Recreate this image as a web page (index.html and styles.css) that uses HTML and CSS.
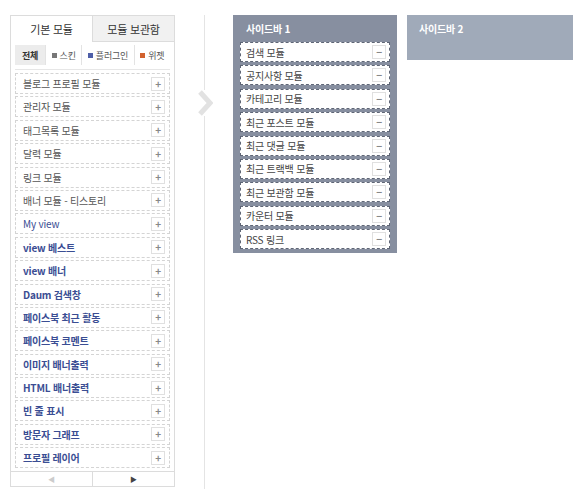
FILE: index.html
```html
<!DOCTYPE html>
<html lang="ko">
  <head>
    <meta charset="UTF-8" />
    <title>사이드바 관리</title>
    <link rel="stylesheet" href="styles.css">
  </head>
  <body>
    <div class="layout">
      <div class="modules">
        <div class="tabs">
          <div class="tab active">기본 모듈</div>
          <div class="tab">모듈 보관함</div>
        </div>
        <div class="filters">
          <span class="filter on">전체</span>
          <span class="filter"><i class="sq skin"></i>스킨</span>
          <span class="filter"><i class="sq plugin"></i>플러그인</span>
          <span class="filter"><i class="sq widget"></i>위젯</span>
        </div>
        <ul class="list">
          <li class="item">블로그 프로필 모듈<span class="btn">+</span></li>
          <li class="item">관리자 모듈<span class="btn">+</span></li>
          <li class="item">태그목록 모듈<span class="btn">+</span></li>
          <li class="item">달력 모듈<span class="btn">+</span></li>
          <li class="item">링크 모듈<span class="btn">+</span></li>
          <li class="item">배너 모듈 - 티스토리<span class="btn">+</span></li>
          <li class="item blue">My view<span class="btn">+</span></li>
          <li class="item blue bold">view 베스트<span class="btn">+</span></li>
          <li class="item blue bold">view 배너<span class="btn">+</span></li>
          <li class="item blue bold">Daum 검색창<span class="btn">+</span></li>
          <li class="item blue bold">페이스북 최근 활동<span class="btn">+</span></li>
          <li class="item blue bold">페이스북 코멘트<span class="btn">+</span></li>
          <li class="item blue bold">이미지 배너출력<span class="btn">+</span></li>
          <li class="item blue bold">HTML 배너출력<span class="btn">+</span></li>
          <li class="item blue bold">빈 줄 표시<span class="btn">+</span></li>
          <li class="item blue bold">방문자 그래프<span class="btn">+</span></li>
          <li class="item blue bold">프로필 레이어<span class="btn">+</span></li>
        </ul>
        <div class="pager">
          <span class="page prev">&#9664;</span>
          <span class="page next">&#9654;</span>
        </div>
      </div>

      <div class="divider">
        <svg class="arrow" width="16" height="26" viewBox="0 0 16 26">
          <path d="M3 2 L13 13 L3 24" fill="none" stroke="#e2e2e2" stroke-width="5" />
        </svg>
      </div>

      <div class="sidebar first">
        <h2 class="title">사이드바 1</h2>
        <ul class="slots">
          <li class="slot">검색 모듈<span class="btn">&minus;</span></li>
          <li class="slot">공지사항 모듈<span class="btn">&minus;</span></li>
          <li class="slot">카테고리 모듈<span class="btn">&minus;</span></li>
          <li class="slot">최근 포스트 모듈<span class="btn">&minus;</span></li>
          <li class="slot">최근 댓글 모듈<span class="btn">&minus;</span></li>
          <li class="slot">최근 트랙백 모듈<span class="btn">&minus;</span></li>
          <li class="slot">최근 보관함 모듈<span class="btn">&minus;</span></li>
          <li class="slot">카운터 모듈<span class="btn">&minus;</span></li>
          <li class="slot">RSS 링크<span class="btn">&minus;</span></li>
        </ul>
      </div>

      <div class="sidebar second">
        <h2 class="title">사이드바 2</h2>
      </div>
    </div>
  </body>
</html>
```

FILE: styles.css
```css
body {
  margin: 0;
  background: #fff;
  font-family: "Noto Sans CJK KR", "Noto Sans", sans-serif;
  font-size: 10px;
  letter-spacing: -0.2px;
  color: #555;
}
ul {
  list-style: none;
  margin: 0;
  padding: 0;
}
.layout {
  display: flex;
  align-items: flex-start;
  padding: 15px 0 0 10px;
  height: 474px;
}

/* left panel */
.modules {
  width: 165px;
  box-sizing: border-box;
  border: 1px solid #dcdcdc;
  border-top: 0;
}
.tabs {
  display: flex;
  height: 27px;
}
.tab {
  flex: 1;
  display: flex;
  align-items: center;
  justify-content: center;
  font-size: 11px;
  color: #333;
  background: #f1f1f1;
  border-top: 1px solid #dcdcdc;
  border-left: 1px solid #dcdcdc;
  border-bottom: 1px solid #dcdcdc;
}
.tab.active {
  background: #fff;
  border-left: 0;
  border-bottom: 0;
}
.filters {
  display: flex;
  align-items: center;
  height: 22px;
  margin: 2px 4px 0;
  border-bottom: 1px solid #e6e6e6;
  padding-bottom: 3px;
  white-space: nowrap;
}
.filter {
  flex: auto;
  display: flex;
  align-items: center;
  justify-content: center;
  height: 20px;
  font-size: 9px;
  color: #555;
  border-left: 1px solid #e3e3e3;
}
.filter.on {
  flex: none;
  width: 30px;
  background: #ececec;
  font-weight: bold;
  color: #333;
  border-left: 0;
}
.sq {
  display: inline-block;
  width: 5px;
  height: 5px;
  margin-right: 3px;
}
.sq.skin { background: #777; }
.sq.plugin { background: #4f5fa8; }
.sq.widget { background: #d2622e; }

.list {
  display: flex;
  flex-direction: column;
  gap: 2.4px;
  padding: 3px 4px 0;
}
.item {
  display: flex;
  align-items: center;
  justify-content: space-between;
  height: 21px;
  box-sizing: border-box;
  padding: 0 4px 0 7px;
  border: 1px dashed #d4d4d4;
  color: #555;
}
.item.blue {
  color: #3a4d93;
}
.item.bold {
  font-weight: 600;
}
.btn {
  display: flex;
  align-items: center;
  justify-content: center;
  width: 12px;
  height: 12px;
  border: 1px solid #e0e0e0;
  background: #fff;
  font-size: 10px;
  font-weight: bold;
  color: #888;
  line-height: 1;
}
.pager {
  display: flex;
  margin-top: 3px;
  border-top: 1px solid #dcdcdc;
}
.page {
  flex: 1;
  height: 14px;
  display: flex;
  align-items: center;
  justify-content: center;
  font-size: 7px;
}
.page.prev {
  color: #ccc;
  border-right: 1px solid #dcdcdc;
}
.page.next {
  color: #444;
}

/* divider */
.divider {
  position: relative;
  width: 58px;
  align-self: stretch;
  display: flex;
  justify-content: center;
}
.divider::before {
  content: "";
  width: 1px;
  height: 100%;
  background: #e4e4e4;
}
.arrow {
  position: absolute;
  left: 22px;
  top: 75px;
  background: #fff;
}

/* sidebars */
.sidebar {
  box-sizing: border-box;
}
.sidebar.first {
  width: 164px;
  background: #878fa0;
  padding: 0 7px 4px;
}
.sidebar.second {
  width: 166px;
  height: 45px;
  margin-left: 10px;
  background: #a0aab9;
  padding: 0 12px;
}
.title {
  margin: 0;
  height: 27px;
  display: flex;
  align-items: center;
  padding-left: 6px;
  font-size: 10px;
  font-weight: bold;
  color: #fff;
}
.sidebar.second .title {
  padding-left: 0;
}
.slots {
  display: flex;
  flex-direction: column;
  gap: 3.4px;
}
.slot {
  display: flex;
  align-items: center;
  justify-content: space-between;
  height: 20px;
  box-sizing: border-box;
  padding: 0 3px 0 5px;
  background: #fff;
  border: 1px dashed #5f6676;
  color: #444;
}
```
